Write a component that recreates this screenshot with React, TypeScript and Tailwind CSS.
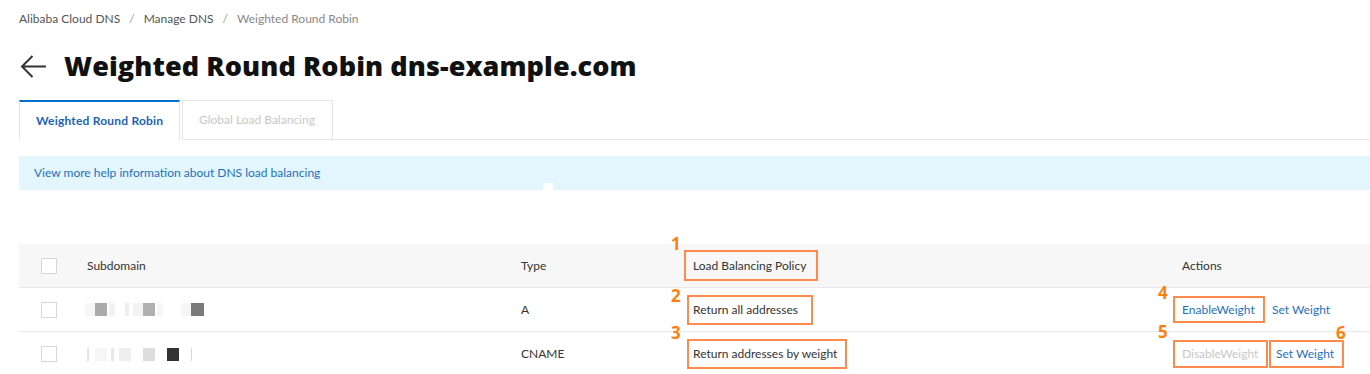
import type { ReactNode } from 'react';

const markPos: Record<string, string> = {
  '1': 'left-[-15px] top-[-17px]',
  '2': 'left-[-18px] top-[-10px]',
  '3': 'left-[-18px] top-[-17px]',
  '4': 'left-[-17px] top-[-14px]',
  '5': 'left-[-17px] top-[-19px]',
  '6': 'left-[65px] top-[-18px]',
};

function Boxed({ n, className, children }: { n: string; className: string; children: ReactNode }) {
  return (
    <span className={`relative inline-flex items-center border-2 border-[#ff8a4c] ${className}`}>
      <span
        className={`absolute ${markPos[n]} font-['Open_Sans',sans-serif] text-[17px] leading-[17px] font-bold text-[#ff7f0e]`}
      >
        {n}
      </span>
      {children}
    </span>
  );
}

function Checkbox() {
  return <span className="block w-[16px] h-[16px] border border-[#d7d7d7] bg-white" />;
}

function Blur({ cells }: { cells: [number, number, string][] }) {
  // mosaic of a hidden subdomain: [left offset, width, colour]
  return (
    <div className="relative h-[13px] w-[130px]">
      {cells.map(([x, w, c], i) => (
        <span key={i} className="absolute top-0 h-[13px]" style={{ left: x, width: w, background: c }} />
      ))}
    </div>
  );
}

export default function App() {
  const row = 'grid grid-cols-[68px_434px_172px_489px_1fr] items-center border-b border-[#e8e8e8]';
  return (
    <div className="min-h-screen bg-white font-['Lato',sans-serif] text-[12px] text-[#333]">
      <div className="pl-[19px] pt-[11px]">
        <div className="flex items-center gap-[9px] leading-[16px] text-[#555]">
          <span>Alibaba Cloud DNS</span>
          <span className="text-[#999]">/</span>
          <span>Manage DNS</span>
          <span className="text-[#999]">/</span>
          <span className="text-[#888]">Weighted Round Robin</span>
        </div>

        <div className="mt-[21px] flex h-[36px] items-center">
          <svg width="27" height="23" viewBox="0 0 27 23" className="ml-[1px]" fill="none" stroke="#333" strokeWidth="2">
            <path d="M26 11.5H2M12.5 1L2 11.5 12.5 22" />
          </svg>
          <h1 className="ml-[17px] font-['Open_Sans',sans-serif] text-[27px] font-extrabold leading-[36px] tracking-[0.1px] text-[#111]">
            Weighted Round Robin dns-example.com
          </h1>
        </div>

        <div className="mt-[16px] flex h-[40px]">
          <div className="flex w-[161px] items-center border-x border-t-2 border-[#e5e5e5] border-t-[#0070cc] pl-[16px] font-bold tracking-[0.2px] text-[#1b63b8]">
            Weighted Round Robin
          </div>
          <div className="ml-[2px] flex w-[151px] items-center border border-[#e5e5e5] pl-[16px] text-[#c8c8c8]">
            Global Load Balancing
          </div>
          <div className="flex-1 border-b border-[#e5e5e5]" />
        </div>

        <div className="relative mt-[16px] flex h-[34px] items-center bg-[#e3f6fe] pl-[15px] text-[#1f6fc1]">
          View more help information about DNS load balancing
          <span className="absolute left-[524px] top-[27px] h-[7px] w-[10px] bg-white" />
        </div>

        <div className="mt-[54px]">
          <div className={`${row} h-[44px] bg-[#f7f7f7]`}>
            <div className="pl-[22px]"><Checkbox /></div>
            <div>Subdomain</div>
            <div>Type</div>
            <div>
              <Boxed n="1" className="ml-[-9px] h-[31px] w-[134px] pl-[7px]">Load Balancing Policy</Boxed>
            </div>
            <div>Actions</div>
          </div>

          <div className={`${row} h-[44px]`}>
            <div className="pl-[22px]"><Checkbox /></div>
            <div className="ml-[-2px]">
              <Blur
                cells={[
                  [0, 10, '#f6f6f6'],
                  [10, 12, '#ababab'],
                  [24, 6, '#f2f2f2'],
                  [40, 4, '#eeeeee'],
                  [48, 10, '#f3f3f3'],
                  [58, 12, '#b0b0b0'],
                  [72, 6, '#f5f5f5'],
                  [96, 10, '#f5f5f5'],
                  [106, 13, '#7b7b7b'],
                ]}
              />
            </div>
            <div>A</div>
            <div>
              <Boxed n="2" className="ml-[-6px] h-[30px] w-[126px] pl-[4px]">Return all addresses</Boxed>
            </div>
            <div className="flex items-center">
              <Boxed n="4" className="ml-[-9px] h-[27px] w-[92px] pl-[7px] text-[#1f6fc1]">EnableWeight</Boxed>
              <span className="ml-[7px] text-[#1f6fc1]">Set Weight</span>
            </div>
          </div>

          <div className={`${row} h-[44px] border-b-0`}>
            <div className="pl-[22px]"><Checkbox /></div>
            <div className="ml-[-2px]">
              <Blur
                cells={[
                  [2, 2, '#e4e4e4'],
                  [10, 12, '#f6f6f6'],
                  [26, 3, '#e8e8e8'],
                  [34, 12, '#efefef'],
                  [58, 12, '#dddddd'],
                  [82, 12, '#333333'],
                  [106, 1, '#d8d8d8'],
                ]}
              />
            </div>
            <div>CNAME</div>
            <div>
              <Boxed n="3" className="ml-[-6px] h-[30px] w-[160px] pl-[4px]">Return addresses by weight</Boxed>
            </div>
            <div className="flex items-center">
              <Boxed n="5" className="ml-[-9px] h-[28px] w-[95px] pl-[7px] text-[#c8c8c8]">DisableWeight</Boxed>
              <Boxed n="6" className="ml-[1px] h-[28px] w-[75px] pl-[5px] text-[#1f6fc1]">Set Weight</Boxed>
            </div>
          </div>
        </div>
      </div>
    </div>
  );
}
